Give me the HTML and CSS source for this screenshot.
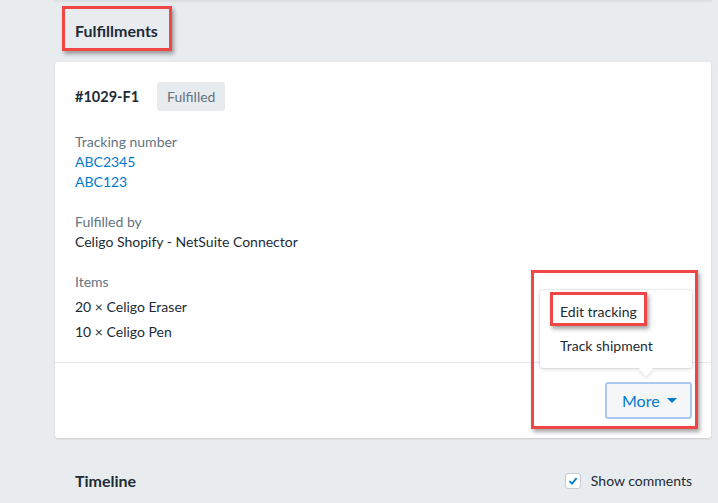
FILE: index.html
```html
<!DOCTYPE html>
<html lang="en">
<head>
    <meta charset="UTF-8">
    <meta name="viewport" content="width=device-width, initial-scale=1.0">
    <title>Fulfillments</title>
    <link rel="stylesheet" href="styles.css">
</head>
<body>
    <div class="page">
        <div class="prev-card"></div>

        <!-- Fulfillments -->
        <div class="section-head">
            <h2>Fulfillments</h2>
        </div>

        <div class="card">
            <div class="card-body">
                <div class="title-row">
                    <span class="order-id">#1029-F1</span>
                    <span class="badge">Fulfilled</span>
                </div>

                <div class="group">
                    <div class="label">Tracking number</div>
                    <a class="link">ABC2345</a>
                    <a class="link">ABC123</a>
                </div>

                <div class="group">
                    <div class="label">Fulfilled by</div>
                    <div>Celigo Shopify - NetSuite Connector</div>
                </div>

                <div class="group">
                    <div class="label">Items</div>
                    <div class="item">20 × Celigo Eraser</div>
                    <div class="item">10 × Celigo Pen</div>
                </div>
            </div>

            <div class="card-footer">
                <div class="more-wrap">
                    <div class="popover">
                        <div class="menu-item">Edit tracking</div>
                        <div class="menu-item">Track shipment</div>
                    </div>
                    <button class="more-btn">More <span class="caret"></span></button>
                </div>
            </div>
        </div>

        <!-- Timeline -->
        <div class="timeline-head">
            <h2>Timeline</h2>
            <label class="check">
                <span class="box">
                    <svg width="10" height="10" viewBox="0 0 10 10"><path d="M1.5 5.2 L4 7.6 L8.6 2.2" fill="none" stroke="#007ace" stroke-width="1.8"/></svg>
                </span>
                Show comments
            </label>
        </div>
    </div>

    <!-- annotation boxes -->
    <div class="mark mark-title"></div>
    <div class="mark mark-edit"></div>
    <div class="mark mark-more"></div>
</body>
</html>
```

FILE: styles.css
```css
body {
    margin: 0;
    padding: 0;
    background-color: #e9ecef;
    font-family: "Lato", "Noto Sans", sans-serif;
    font-size: 14px;
    line-height: 20px;
    color: #212b36;
    overflow: hidden;
}
.page {
    width: 656px;
    margin-left: 55px;
}
.prev-card {
    height: 0;
    box-shadow: 0 0 3px 1px rgba(0, 0, 0, 0.12);
}
h2 {
    margin: 0;
    font-size: 16px;
    line-height: 20px;
    font-weight: 700;
}
.section-head {
    padding: 21px 20px 21px;
}
.card {
    background: #fff;
    border-radius: 3px;
    box-shadow: 0 1px 2px rgba(63, 63, 68, 0.18);
}
.card-body {
    padding: 20px;
    border-bottom: 1px solid #e6e9ed;
}
.title-row {
    display: flex;
    align-items: center;
    gap: 18px;
}
.order-id {
    font-size: 14.5px;
    font-weight: 700;
}
.badge {
    background: #e8ebee;
    color: #637381;
    border-radius: 3px;
    padding: 5px 10px 4px;
}
.group {
    margin-top: 20px;
}
.title-row + .group {
    margin-top: 21px;
}
.label {
    color: #637381;
}
.link {
    display: block;
    color: #007ace;
}
.item {
    margin-top: 5px;
}
.card-footer {
    padding: 19px 19px 19px;
    display: flex;
    justify-content: flex-end;
}
.more-wrap {
    position: relative;
}
.more-btn {
    height: 37px;
    width: 87px;
    font-family: inherit;
    font-size: 16px;
    color: #007ace;
    background: #f4f6f8;
    border: 2px solid #a9c9f3;
    border-radius: 3px;
    padding: 0 12px 0 15px;
    display: flex;
    align-items: center;
    gap: 7px;
}
.caret {
    width: 0;
    height: 0;
    border-left: 5px solid transparent;
    border-right: 5px solid transparent;
    border-top: 5px solid #007ace;
}
.popover {
    position: absolute;
    right: 0;
    bottom: 51px;
    width: 152px;
    padding: 5px 0;
    background: #fff;
    border-radius: 3px;
    box-shadow: 0 0 0 1px rgba(63, 63, 68, 0.06), 0 1px 4px rgba(63, 63, 68, 0.2);
}
.popover::after {
    content: "";
    position: absolute;
    left: 101px;
    bottom: -6px;
    width: 10px;
    height: 10px;
    background: #fff;
    transform: rotate(45deg);
    box-shadow: 2px 2px 3px rgba(63, 63, 68, 0.12);
}
.menu-item {
    padding: 7px 20px;
    position: relative;
    z-index: 1;
}
.timeline-head {
    display: flex;
    justify-content: space-between;
    align-items: center;
    padding: 33px 19px 0 20px;
}
.check {
    display: flex;
    align-items: center;
    gap: 10px;
    color: #212b36;
}
.box {
    width: 14px;
    height: 14px;
    background: #fff;
    border: 1px solid #c4cdd5;
    border-radius: 3px;
    display: flex;
    align-items: center;
    justify-content: center;
}
.mark {
    position: absolute;
    border: 3px solid #f04646;
    box-shadow: 2px 3px 4px rgba(0, 0, 0, 0.35);
}
.mark-title {
    left: 62px;
    top: 6px;
    width: 104px;
    height: 39px;
}
.mark-edit {
    left: 550px;
    top: 292px;
    width: 91px;
    height: 28px;
}
.mark-more {
    left: 531px;
    top: 270px;
    width: 161px;
    height: 153px;
}
```
